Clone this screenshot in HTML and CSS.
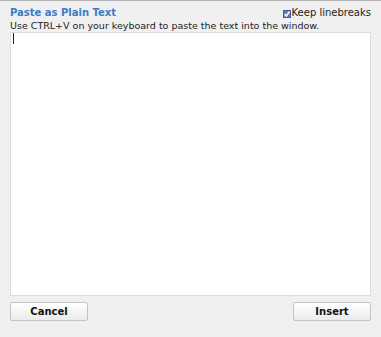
FILE: index.html
```html
<!DOCTYPE html>
<html>
<head>
<meta charset="utf-8">
<link rel="stylesheet" href="styles.css">
</head>
<body>
<div class="dialog">
  <div class="header">
    <div class="title">Paste as Plain Text</div>
    <label class="keep"><span class="check"><svg width="8" height="8" viewBox="0 0 8 8"><rect x="0.5" y="0.5" width="7" height="7" fill="#5b7ec2" stroke="#3d5c9c"/><path d="M1.6 4 L3.3 6 L6.6 1.5" fill="none" stroke="#fff" stroke-width="1.5"/></svg></span>Keep linebreaks</label>
  </div>
  <div class="hint">Use CTRL+V on your keyboard to paste the text into the window.</div>
  <div class="area"><span class="caret"></span></div>
  <div class="buttons">
    <button class="btn">Cancel</button>
    <button class="btn">Insert</button>
  </div>
</div>
</body>
</html>
```
FILE: styles.css
```css
html, body {
  margin: 0;
  padding: 0;
  background: #f0f0f0;
}
.dialog {
  width: 381px;
  height: 337px;
  box-sizing: border-box;
  border-top: 1px solid #b4b4b4;
  padding: 5px 10px 0 10px;
  font-family: "DejaVu Sans", Verdana, sans-serif;
  font-size: 9.5px;
  color: #222;
  display: flex;
  flex-direction: column;
}
.header {
  display: flex;
  justify-content: space-between;
  align-items: center;
  height: 14px;
  line-height: 14px;
}
.title {
  font-weight: bold;
  font-size: 10px;
  color: #3b7bc4;
}
.keep {
  display: flex;
  align-items: center;
  font-size: 10px;
  color: #222;
}
.check {
  display: inline-flex;
  margin-right: 1px;
  margin-top: 1px;
}
.hint {
  font-size: 9.5px;
  height: 12px;
  line-height: 12px;
}
.area {
  height: 264px;
  box-sizing: border-box;
  background: #fff;
  border: 1px solid #dcdcdc;
  position: relative;
}
.caret {
  position: absolute;
  left: 2px;
  top: 0;
  width: 1px;
  height: 11px;
  background: #222;
}
.buttons {
  display: flex;
  justify-content: space-between;
  margin-top: 6px;
}
.btn {
  width: 78px;
  height: 19px;
  box-sizing: border-box;
  border: 1px solid #c4c4c4;
  border-radius: 2px;
  background: linear-gradient(#ffffff, #ebebeb);
  font-family: "DejaVu Sans", Verdana, sans-serif;
  font-weight: bold;
  font-size: 10px;
  color: #111;
  padding: 0;
}
```
